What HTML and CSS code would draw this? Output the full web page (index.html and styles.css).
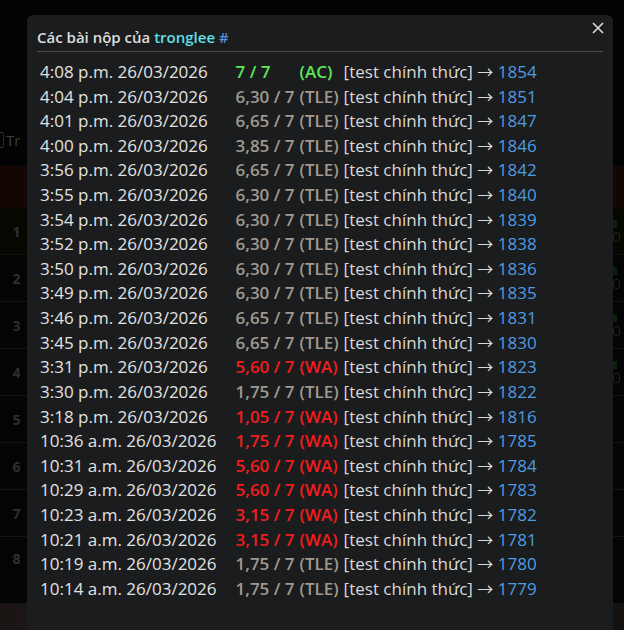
FILE: index.html
```html
<!DOCTYPE html>
<html lang="vi">
<head>
<meta charset="utf-8">
<title>Các bài nộp</title>
<link rel="stylesheet" href="styles.css">
</head>
<body>
<div class="page">
  <div class="top-area">
    <div class="tabline"><span class="tabbox"></span><span class="tabtext">Tr</span></div>
  </div>
  <div class="band"></div>
  <div class="rank-row first"><span class="num">1</span><span class="rside"><i class="g"></i><i class="z"></i></span></div>
  <div class="rank-row"><span class="num">2</span><span class="rside"><i class="g"></i><i class="z"></i></span></div>
  <div class="rank-row"><span class="num">3</span><span class="rside"><i class="g"></i><i class="z"></i></span></div>
  <div class="rank-row"><span class="num">4</span><span class="rside"><i class="g"></i><i class="z"></i></span></div>
  <div class="rank-row"><span class="num">5</span><span class="rside"></span></div>
  <div class="rank-row"><span class="num">6</span><span class="rside"></span></div>
  <div class="rank-row"><span class="num">7</span><span class="rside"></span></div>
  <div class="rank-row tall"><span class="num">8</span><span class="rside"></span></div>
  <div class="photo"></div>
</div>

<div class="modal">
  <div class="modal-head">
    <span class="title">Các bài nộp của <span class="user">tronglee</span> <span class="hash">#</span></span>
  </div>
  <button class="close" aria-label="Đóng">
    <svg width="12" height="12" viewBox="0 0 12 12"><path d="M1 1 L11 11 M11 1 L1 11" stroke="#dcdcdc" stroke-width="1.6" fill="none"/></svg>
  </button>
  <div class="divider"></div>
  <div class="subs">
    <div class="row"><span class="t">4:08 p.m. 26/03/2026</span><span class="s ac">7 / 7</span><span class="st ac">(AC)</span><span class="d">[test chính thức] <span class="arr">→</span> <a>1854</a></span></div>
    <div class="row"><span class="t">4:04 p.m. 26/03/2026</span><span class="s tle">6,30 / 7</span><span class="st tle">(TLE)</span><span class="d">[test chính thức] <span class="arr">→</span> <a>1851</a></span></div>
    <div class="row"><span class="t">4:01 p.m. 26/03/2026</span><span class="s tle">6,65 / 7</span><span class="st tle">(TLE)</span><span class="d">[test chính thức] <span class="arr">→</span> <a>1847</a></span></div>
    <div class="row"><span class="t">4:00 p.m. 26/03/2026</span><span class="s tle">3,85 / 7</span><span class="st tle">(TLE)</span><span class="d">[test chính thức] <span class="arr">→</span> <a>1846</a></span></div>
    <div class="row"><span class="t">3:56 p.m. 26/03/2026</span><span class="s tle">6,65 / 7</span><span class="st tle">(TLE)</span><span class="d">[test chính thức] <span class="arr">→</span> <a>1842</a></span></div>
    <div class="row"><span class="t">3:55 p.m. 26/03/2026</span><span class="s tle">6,30 / 7</span><span class="st tle">(TLE)</span><span class="d">[test chính thức] <span class="arr">→</span> <a>1840</a></span></div>
    <div class="row"><span class="t">3:54 p.m. 26/03/2026</span><span class="s tle">6,30 / 7</span><span class="st tle">(TLE)</span><span class="d">[test chính thức] <span class="arr">→</span> <a>1839</a></span></div>
    <div class="row"><span class="t">3:52 p.m. 26/03/2026</span><span class="s tle">6,30 / 7</span><span class="st tle">(TLE)</span><span class="d">[test chính thức] <span class="arr">→</span> <a>1838</a></span></div>
    <div class="row"><span class="t">3:50 p.m. 26/03/2026</span><span class="s tle">6,30 / 7</span><span class="st tle">(TLE)</span><span class="d">[test chính thức] <span class="arr">→</span> <a>1836</a></span></div>
    <div class="row"><span class="t">3:49 p.m. 26/03/2026</span><span class="s tle">6,30 / 7</span><span class="st tle">(TLE)</span><span class="d">[test chính thức] <span class="arr">→</span> <a>1835</a></span></div>
    <div class="row"><span class="t">3:46 p.m. 26/03/2026</span><span class="s tle">6,65 / 7</span><span class="st tle">(TLE)</span><span class="d">[test chính thức] <span class="arr">→</span> <a>1831</a></span></div>
    <div class="row"><span class="t">3:45 p.m. 26/03/2026</span><span class="s tle">6,65 / 7</span><span class="st tle">(TLE)</span><span class="d">[test chính thức] <span class="arr">→</span> <a>1830</a></span></div>
    <div class="row"><span class="t">3:31 p.m. 26/03/2026</span><span class="s wa">5,60 / 7</span><span class="st wa">(WA)</span><span class="d">[test chính thức] <span class="arr">→</span> <a>1823</a></span></div>
    <div class="row"><span class="t">3:30 p.m. 26/03/2026</span><span class="s tle">1,75 / 7</span><span class="st tle">(TLE)</span><span class="d">[test chính thức] <span class="arr">→</span> <a>1822</a></span></div>
    <div class="row"><span class="t">3:18 p.m. 26/03/2026</span><span class="s wa">1,05 / 7</span><span class="st wa">(WA)</span><span class="d">[test chính thức] <span class="arr">→</span> <a>1816</a></span></div>
    <div class="row"><span class="t">10:36 a.m. 26/03/2026</span><span class="s wa">1,75 / 7</span><span class="st wa">(WA)</span><span class="d">[test chính thức] <span class="arr">→</span> <a>1785</a></span></div>
    <div class="row"><span class="t">10:31 a.m. 26/03/2026</span><span class="s wa">5,60 / 7</span><span class="st wa">(WA)</span><span class="d">[test chính thức] <span class="arr">→</span> <a>1784</a></span></div>
    <div class="row"><span class="t">10:29 a.m. 26/03/2026</span><span class="s wa">5,60 / 7</span><span class="st wa">(WA)</span><span class="d">[test chính thức] <span class="arr">→</span> <a>1783</a></span></div>
    <div class="row"><span class="t">10:23 a.m. 26/03/2026</span><span class="s wa">3,15 / 7</span><span class="st wa">(WA)</span><span class="d">[test chính thức] <span class="arr">→</span> <a>1782</a></span></div>
    <div class="row"><span class="t">10:21 a.m. 26/03/2026</span><span class="s wa">3,15 / 7</span><span class="st wa">(WA)</span><span class="d">[test chính thức] <span class="arr">→</span> <a>1781</a></span></div>
    <div class="row"><span class="t">10:19 a.m. 26/03/2026</span><span class="s tle">1,75 / 7</span><span class="st tle">(TLE)</span><span class="d">[test chính thức] <span class="arr">→</span> <a>1780</a></span></div>
    <div class="row"><span class="t">10:14 a.m. 26/03/2026</span><span class="s tle">1,75 / 7</span><span class="st tle">(TLE)</span><span class="d">[test chính thức] <span class="arr">→</span> <a>1779</a></span></div>
  </div>
</div>
</body>
</html>
```

FILE: styles.css
```css
html, body {
  margin: 0;
  padding: 0;
}
body {
  width: 624px;
  height: 630px;
  overflow: hidden;
  background: #030303;
  font-family: "Open Sans", "Noto Sans", sans-serif;
  position: relative;
}

/* dimmed page behind the modal */
.page {
  display: flex;
  flex-direction: column;
}
.top-area {
  height: 166px;
  display: flex;
  flex-direction: column;
  justify-content: flex-end;
}
.tabline {
  width: 27px;
  height: 24px;
  margin-bottom: 14px;
  display: flex;
  align-items: center;
  gap: 2px;
  overflow: hidden;
  color: #3a3d40;
  font-size: 15px;
}
.tabbox {
  flex: none;
  width: 3px;
  height: 14px;
  border: 1px solid #2c2e30;
  border-left: 0;
  border-radius: 0 2px 2px 0;
}
.tabtext {
  white-space: nowrap;
}
.band {
  height: 42px;
  background: #140703;
}
.rank-row {
  height: 46px;
  border-bottom: 1px solid #141414;
  display: flex;
  align-items: center;
  justify-content: space-between;
  background: #040404;
}
.rank-row.first {
  background: #070702;
}
.rank-row.tall {
  height: 66px;
  align-items: flex-start;
}
.rank-row.tall .num {
  margin-top: 12px;
}
.num {
  width: 27px;
  text-align: center;
  padding-left: 3px;
  color: #2f2f2f;
  font-weight: 700;
  font-size: 14px;
}
.rside {
  width: 11px;
  display: flex;
  flex-direction: column;
  gap: 4px;
}
.rside .g {
  display: block;
  width: 4px;
  height: 8px;
  background: #0b200c;
}
.rside .z {
  display: block;
  width: 5px;
  height: 8px;
  border: 1px solid #222;
  border-radius: 3px;
}
.photo {
  height: 40px;
  background: linear-gradient(90deg, #1a1514, #2a2220 40%, #15110f);
}

/* modal */
.modal {
  position: absolute;
  left: 27px;
  top: 15px;
  width: 586px;
  height: 640px;
  background: #1b1c1e;
  border-radius: 6px;
  box-sizing: border-box;
}
.modal-head {
  padding: 7px 10px 0 10px;
  height: 36px;
  box-sizing: border-box;
  display: flex;
  align-items: center;
}
.title {
  font-size: 15px;
  font-weight: 600;
  color: #dedede;
}
.user {
  color: #5de0e6;
}
.hash {
  color: #4b8fd9;
}
.close {
  position: absolute;
  top: 6px;
  right: 8px;
  width: 14px;
  height: 14px;
  padding: 0;
  border: 0;
  background: none;
  display: flex;
  align-items: center;
  justify-content: center;
}
.divider {
  height: 1px;
  margin: 0 10px;
  background: #4a4b4d;
}
.subs {
  margin-top: 8px;
  padding-left: 13px;
  display: grid;
  grid-template-columns: max-content max-content max-content 1fr;
  grid-auto-rows: 24.62px;
  column-gap: 5px;
  font-size: 17px;
  line-height: 24.62px;
}
.row {
  display: contents;
}
.t {
  color: #e2e2e2;
  padding-right: 14px;
  white-space: nowrap;
}
.s, .st {
  font-weight: 600;
  white-space: nowrap;
}
.d {
  color: #d9d9d9;
  white-space: nowrap;
  overflow: hidden;
}
.arr {
  font-family: "Noto Sans CJK SC", sans-serif;
  font-size: 16px;
  line-height: 1;
}
.d a {
  color: #4f9be0;
}
.ac { color: #5ce65a; }
.tle { color: #a09a8e; }
.wa { color: #f21c1c; }
```
